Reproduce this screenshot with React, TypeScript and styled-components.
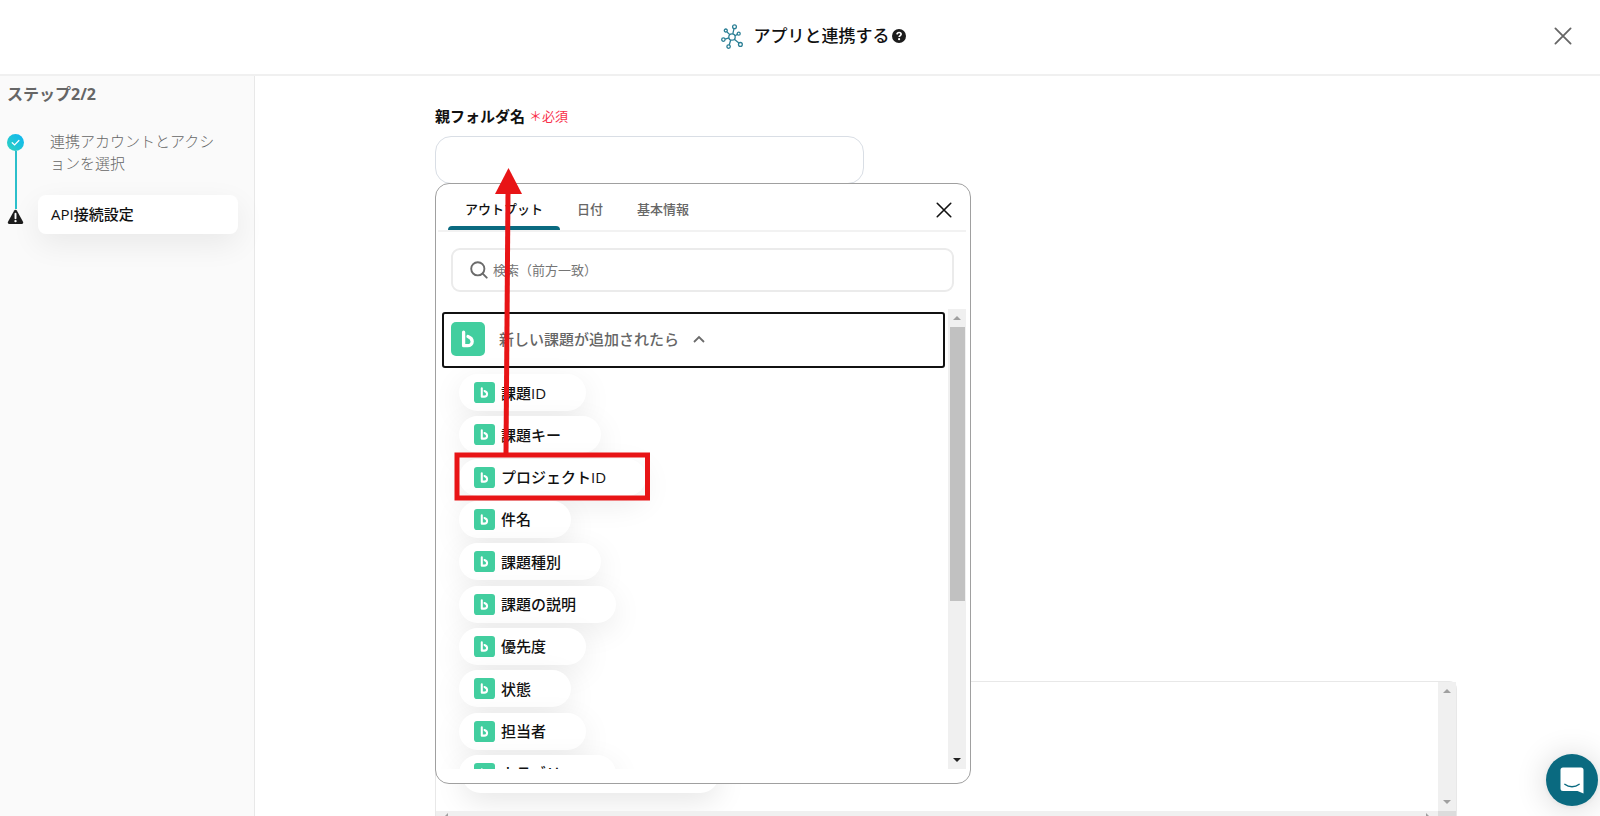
import React from "react";
import styled, { createGlobalStyle } from "styled-components";

const GlobalStyle = createGlobalStyle`
  *, *::before, *::after { box-sizing: border-box; }
  body {
    margin: 0;
    background: #fff;
    color: #111;
    font-family: "Open Sans", "Noto Sans CJK JP", sans-serif;
    font-size: 15px;
    line-height: 22px;
  }
  button, input { font: inherit; color: inherit; }
  h1, h2, p, ol, ul { margin: 0; padding: 0; }
  ol, ul { list-style: none; }
`;

const Page = styled.div`
  display: flex;
  flex-direction: column;
  height: 100vh;
  overflow: hidden;
`;

const Header = styled.header`
  position: relative;
  display: flex;
  flex: none;
  align-items: center;
  justify-content: center;
  gap: 10px;
  height: 76px;
  padding: 0 28px 2px 54px;
  border-bottom: 2px solid #f0f0f0;
`;

const Title = styled.h1`
  display: flex;
  align-items: center;
  gap: 2px;
  font-size: 17px;
  font-weight: 500;
  line-height: 24px;
`;

const IconButton = styled.button`
  display: flex;
  padding: 0;
  border: 0;
  background: none;
`;

const PageClose = styled(IconButton)`
  position: absolute;
  top: 27px;
  right: 28px;
`;

const Body = styled.div`
  display: flex;
  flex: 1;
  min-height: 0;
`;

const Sidebar = styled.aside`
  flex: none;
  width: 255px;
  padding: 7px 16px 0 7px;
  border-right: 1px solid #e8e8e8;
  background: #fafafa;
`;

const StepCount = styled.h2`
  color: #666;
  font-size: 16px;
  font-weight: 700;
  line-height: 22px;
`;

const Steps = styled.ol`
  margin-top: 25px;
`;

const Step = styled.li<{ $current?: boolean }>`
  display: grid;
  grid-template-columns: 17px 1fr;
  column-gap: 14px;
  align-items: ${(p) => (p.$current ? "center" : "stretch")};
`;

const Marker = styled.span`
  display: flex;
  flex-direction: column;
  align-items: center;
  padding-top: 4px;
`;

const Rail = styled.span`
  flex: 1;
  width: 2px;
  margin-bottom: -14px;
  background: #2bbfcb;
`;

const StepName = styled.p<{ $current?: boolean }>`
  padding: ${(p) => (p.$current ? "8px 12px 9px 13px" : "0 12px 21px 12px")};
  border-radius: 8px;
  background: ${(p) => (p.$current ? "#fff" : "none")};
  box-shadow: ${(p) => (p.$current ? "0 10px 30px rgba(0, 0, 0, 0.07)" : "none")};
  color: ${(p) => (p.$current ? "#111" : "#666")};
  font-weight: ${(p) => (p.$current ? 500 : 300)};
`;

const Main = styled.main`
  display: flex;
  flex: 1;
  flex-direction: column;
  min-width: 0;
  padding: 30px 143px 0 180px;
`;

const Field = styled.div`
  position: relative;
  flex: none;
  max-width: 536px;
`;

const Label = styled.label`
  display: flex;
  align-items: center;
  gap: 4px;
  height: 30px;
  padding-bottom: 10px;
  font-weight: 700;
`;

const Required = styled.span`
  color: #f8304a;
  font-size: 13px;
  font-weight: 400;
`;

const TextInput = styled.input`
  display: block;
  width: 80%;
  height: 48px;
  padding: 0 16px;
  border: 1px solid #d9dee5;
  border-radius: 16px;
  outline: 0;
  background: #fff;
`;

const Popup = styled.section`
  position: absolute;
  z-index: 2;
  top: 77px;
  left: 0;
  display: flex;
  flex-direction: column;
  width: 100%;
  height: 601px;
  padding: 0 4px 14px 2px;
  border: 1px solid #a0a0a0;
  border-radius: 14px;
  background: #fff;
`;

const Tabs = styled.div`
  display: flex;
  flex: none;
  align-items: stretch;
  height: 48px;
  padding: 0 14px 0 10px;
  border-bottom: 2px solid #f2f2f2;
`;

const Tab = styled.button<{ $active?: boolean }>`
  position: relative;
  padding: 4px 17px 0;
  border: 0;
  background: none;
  color: ${(p) => (p.$active ? "#111" : "#666")};
  font-size: 13px;
  font-weight: 500;

  &::after {
    position: absolute;
    right: 0;
    bottom: 0;
    left: 0;
    height: 4px;
    border-radius: 4px 4px 0 0;
    background: ${(p) => (p.$active ? "#0a6a80" : "transparent")};
    content: "";
  }
`;

const PopupClose = styled(IconButton)`
  align-items: center;
  margin-left: auto;
  padding-top: 6px;
`;

const Search = styled.label`
  display: flex;
  flex: none;
  align-items: center;
  gap: 5px;
  height: 44px;
  margin: 16px 12px 17px 13px;
  padding: 0 17px;
  border: 2px solid #ebebeb;
  border-radius: 9px;
`;

const SearchInput = styled.input`
  flex: 1;
  min-width: 0;
  padding: 0;
  border: 0;
  outline: 0;
  background: none;
  font-size: 13px;

  &::placeholder { color: #757575; opacity: 1; }
`;

const ScrollArea = styled.div`
  display: flex;
  flex: 1;
  min-height: 0;
`;

const ScrollContent = styled.div`
  flex: 1;
  min-width: 0;
  padding: 3px 3px 0 4px;
  overflow: hidden;
`;

const Bar = styled.div`
  display: flex;
  flex: none;
  flex-direction: column;
  align-items: center;
  justify-content: space-between;
  width: 18px;
  background: #f0f0f0;
`;

const Thumb = styled.div`
  flex: none;
  width: 15px;
  height: 274px;
  margin-bottom: auto;
  background: #c1c1c1;
`;

const GroupButton = styled.button`
  display: flex;
  align-items: center;
  width: 100%;
  height: 56px;
  padding: 0 7px 2px;
  border: 2px solid #111;
  border-radius: 3px;
  background: #fff;
  color: #666;
  font-weight: 500;
`;

const GroupName = styled.span`
  margin: 0 14px;
`;

const ChipList = styled.ul`
  display: flex;
  flex-direction: column;
  align-items: flex-start;
  justify-content: space-between;
  height: 418px;
  margin: 6px 0 0 17px;
`;

const Chip = styled.button`
  display: flex;
  align-items: center;
  gap: 6px;
  height: 37px;
  padding: 0 40px 0 15px;
  border: 0;
  border-radius: 19px;
  background: #fff;
  box-shadow: 0 8px 30px rgba(0, 0, 0, 0.08);
  font-weight: 500;
  white-space: nowrap;
`;

const Lower = styled.div`
  display: flex;
  flex: 1;
  flex-direction: column;
  margin-top: 497px;
  min-height: 0;
`;

const Output = styled.div`
  display: grid;
  flex: 1;
  grid-template: 1fr 5px / 1fr 18px;
  min-height: 0;
  border: 1px solid #e8e8e8;
  border-bottom: 0;
  border-radius: 0 8px 0 0;
`;

const OutputBody = styled.div`
  min-height: 0;
  padding: 74px 0 0 26px;
  overflow: hidden;
`;

const BlankChip = styled.div`
  width: 257px;
  height: 37px;
  border-radius: 19px;
  background: #fff;
  box-shadow: 0 8px 30px rgba(0, 0, 0, 0.1);
`;

const BottomBar = styled.div`
  display: flex;
  justify-content: space-between;
  padding: 2px 8px 0;
  overflow: hidden;
  background: #f0f0f0;
`;

const Corner = styled.div`
  background: #dcdcdc;
`;

const ChatButton = styled.button`
  position: fixed;
  z-index: 3;
  right: 2px;
  bottom: 10px;
  display: grid;
  place-items: center;
  width: 52px;
  height: 52px;
  padding: 0;
  border: 0;
  border-radius: 50%;
  background: #0a6a80;
  box-shadow: 0 1px 6px rgba(0, 0, 0, 0.06), 0 2px 32px rgba(0, 0, 0, 0.16);
`;

const Callout = styled.svg`
  position: absolute;
  z-index: 4;
  top: 62px;
  left: 19px;
  pointer-events: none;
`;

const Cross = ({ size, color }: { size: number; color: string }) => (
  <svg width={size} height={size} viewBox="0 0 18 18" fill="none" stroke={color} strokeWidth="1.8" strokeLinecap="round" aria-hidden="true">
    <path d="M1.4 1.4 16.6 16.6M16.6 1.4 1.4 16.6" />
  </svg>
);

const BrandIcon = ({ size }: { size: number }) => (
  <svg width={size} height={size} viewBox="0 0 34 34" aria-hidden="true">
    <rect width="34" height="34" rx="5" fill="#42ce9f" />
    <path d="M12.6 10.2v13.5h4c2.700 0 4.600-1.700 4.600-4.200 0-2.300-1.500-4-4.200-5" fill="none" stroke="#fff" strokeWidth="3.3" strokeLinecap="round" strokeLinejoin="round" />
  </svg>
);

const HubIcon = () => (
  <svg width="23" height="25" viewBox="0 0 23 25" fill="none" stroke="#2b7f95" strokeWidth="1.3" aria-hidden="true">
    <circle cx="11" cy="13" r="3.2" />
    <circle cx="13.5" cy="2.7" r="1.9" />
    <circle cx="4.8" cy="6.5" r="1.5" />
    <circle cx="17.7" cy="9.7" r="1.5" />
    <circle cx="2.4" cy="15.6" r="1.7" />
    <circle cx="7.6" cy="22.6" r="1.7" />
    <circle cx="19.4" cy="20.4" r="1.9" />
    <path d="m11.8 9.8 1.2-5.2M8.8 10.6 5.8 7.7M14 11.7l2.4-1.3M7.9 13.8l-3.8 1.4M9.7 16l-1.5 5M13.3 15.3l4.6 3.8" />
  </svg>
);

const HelpIcon = () => (
  <svg width="14" height="14" viewBox="0 0 14 14" aria-hidden="true">
    <circle cx="7" cy="7" r="7" fill="#1c1c1c" />
    <path d="M5 5.4c.1-1.2.9-1.9 2.1-1.9s2 .7 2 1.7c0 1.4-1.9 1.4-1.9 2.8" fill="none" stroke="#fff" strokeWidth="1.7" />
    <circle cx="7.1" cy="10.2" r="1.1" fill="#fff" />
  </svg>
);

const DoneIcon = () => (
  <svg width="17" height="17" viewBox="0 0 17 17" aria-hidden="true">
    <defs>
      <linearGradient id="done" x1="0" y1="1" x2="1" y2="0">
        <stop offset="0" stopColor="#2fd3bd" />
        <stop offset="1" stopColor="#0db4f5" />
      </linearGradient>
    </defs>
    <circle cx="8.5" cy="8.5" r="8.5" fill="url(#done)" />
    <path d="m5.2 8.7 2.4 2.3 4.3-4.5" fill="none" stroke="#fff" strokeWidth="1.2" strokeLinecap="round" />
  </svg>
);

const WarningIcon = () => (
  <svg width="17" height="16" viewBox="0 0 17 16" aria-hidden="true">
    <path d="M8.5.8c.6 0 1 .3 1.3.8l6.2 11.2c.6 1.1 0 2.2-1.2 2.2H2.2C1 15 .4 13.900 1 12.800L7.200 1.600c.3-.5.7-.8 1.300-.8z" fill="#1c1c1c" />
    <path d="M8.5 4.7v4.5" stroke="#fff" strokeWidth="1.9" strokeLinecap="round" />
    <circle cx="8.5" cy="12.1" r="1.2" fill="#fff" />
  </svg>
);

const SearchIcon = () => (
  <svg width="18" height="18" viewBox="0 0 18 18" fill="none" stroke="#6b6b6b" strokeWidth="1.9" strokeLinecap="round" aria-hidden="true">
    <circle cx="7.8" cy="7.8" r="6.6" />
    <path d="m12.7 12.7 4 4" />
  </svg>
);

const ChevronUp = () => (
  <svg width="12" height="8" viewBox="0 0 12 8" fill="none" stroke="#6b6b6b" strokeWidth="1.8" aria-hidden="true">
    <path d="m1 7 5-5 5 5" />
  </svg>
);

const Arrow = ({ turn = 0, color = "#a0a0a0" }: { turn?: number; color?: string }) => (
  <svg width="18" height="18" viewBox="0 0 18 18" aria-hidden="true">
    <path d="M5 11h8L9 7z" fill={color} transform={`rotate(${turn} 9 9)`} />
  </svg>
);

const SideArrow = ({ flip }: { flip?: boolean }) => (
  <svg width="4" height="8" viewBox="0 0 4 8" aria-hidden="true">
    <path d={flip ? "M0 0v8l4-4z" : "M4 0v8L0 4z"} fill="#a0a0a0" />
  </svg>
);

const ChatIcon = () => (
  <svg width="24" height="27" viewBox="0 0 24 27" aria-hidden="true">
    <path d="M3 .5h18A2.500 2.500 0 0 1 23.500 3v23.500L17.500 24H3a2.500 2.500 0 0 1-2.500-2.500V3A2.500 2.500 0 0 1 3 .5z" fill="#fff" />
    <path d="M4.800 17.300c4.200 3.200 10.200 3.200 14.400 0" fill="none" stroke="#0a6a80" strokeWidth="1.4" strokeLinecap="round" />
  </svg>
);

const tabs = ["アウトプット", "日付", "基本情報"];

const outputs = [
  "課題ID",
  "課題キー",
  "プロジェクトID",
  "件名",
  "課題種別",
  "課題の説明",
  "優先度",
  "状態",
  "担当者",
  "カテゴリー",
];

export default function App() {
  return (
    <Page>
      <GlobalStyle />
      <Header>
        <HubIcon />
        <Title>
          アプリと連携する
          <IconButton type="button" aria-label="ヘルプ"><HelpIcon /></IconButton>
        </Title>
        <PageClose type="button" aria-label="閉じる"><Cross size={18} color="#666" /></PageClose>
      </Header>
      <Body>
        <Sidebar>
          <StepCount>ステップ2/2</StepCount>
          <Steps>
            <Step>
              <Marker><DoneIcon /><Rail /></Marker>
              <StepName>連携アカウントとアクションを選択</StepName>
            </Step>
            <Step $current>
              <Marker><WarningIcon /></Marker>
              <StepName $current>API接続設定</StepName>
            </Step>
          </Steps>
        </Sidebar>
        <Main>
          <Field>
            <Label htmlFor="parent-folder">
              親フォルダ名 <Required>＊必須</Required>
            </Label>
            <TextInput id="parent-folder" type="text" />
            <Popup>
              <Tabs role="tablist">
                {tabs.map((name, i) => (
                  <Tab key={name} type="button" role="tab" aria-selected={i === 0} $active={i === 0}>{name}</Tab>
                ))}
                <PopupClose type="button" aria-label="閉じる"><Cross size={16} color="#111" /></PopupClose>
              </Tabs>
              <Search>
                <SearchIcon />
                <SearchInput type="text" aria-label="検索" placeholder="検索（前方一致）" />
              </Search>
              <ScrollArea>
                <ScrollContent>
                  <GroupButton type="button" aria-expanded="true">
                    <BrandIcon size={34} />
                    <GroupName>新しい課題が追加されたら</GroupName>
                    <ChevronUp />
                  </GroupButton>
                  <ChipList>
                    {outputs.map((name) => (
                      <li key={name}>
                        <Chip type="button"><BrandIcon size={21} />{name}</Chip>
                      </li>
                    ))}
                  </ChipList>
                </ScrollContent>
                <Bar>
                  <Arrow />
                  <Thumb />
                  <Arrow turn={180} color="#222" />
                </Bar>
              </ScrollArea>
            </Popup>
            <Callout width="197" height="334" viewBox="0 0 197 334" aria-hidden="true">
              <path d="M52 286 54 24" stroke="#e81416" strokeWidth="5" />
              <path d="M54.5 0 68 26H41z" fill="#e81416" />
              <rect x="3" y="287" width="190.5" height="43" fill="none" stroke="#e81416" strokeWidth="5" />
            </Callout>
          </Field>
          <Lower>
            <Output>
              <OutputBody><BlankChip /></OutputBody>
              <Bar><Arrow /><Arrow turn={180} /></Bar>
              <BottomBar><SideArrow /><SideArrow flip /></BottomBar>
              <Corner />
            </Output>
          </Lower>
        </Main>
      </Body>
      <ChatButton type="button" aria-label="チャットを開く"><ChatIcon /></ChatButton>
    </Page>
  );
}
